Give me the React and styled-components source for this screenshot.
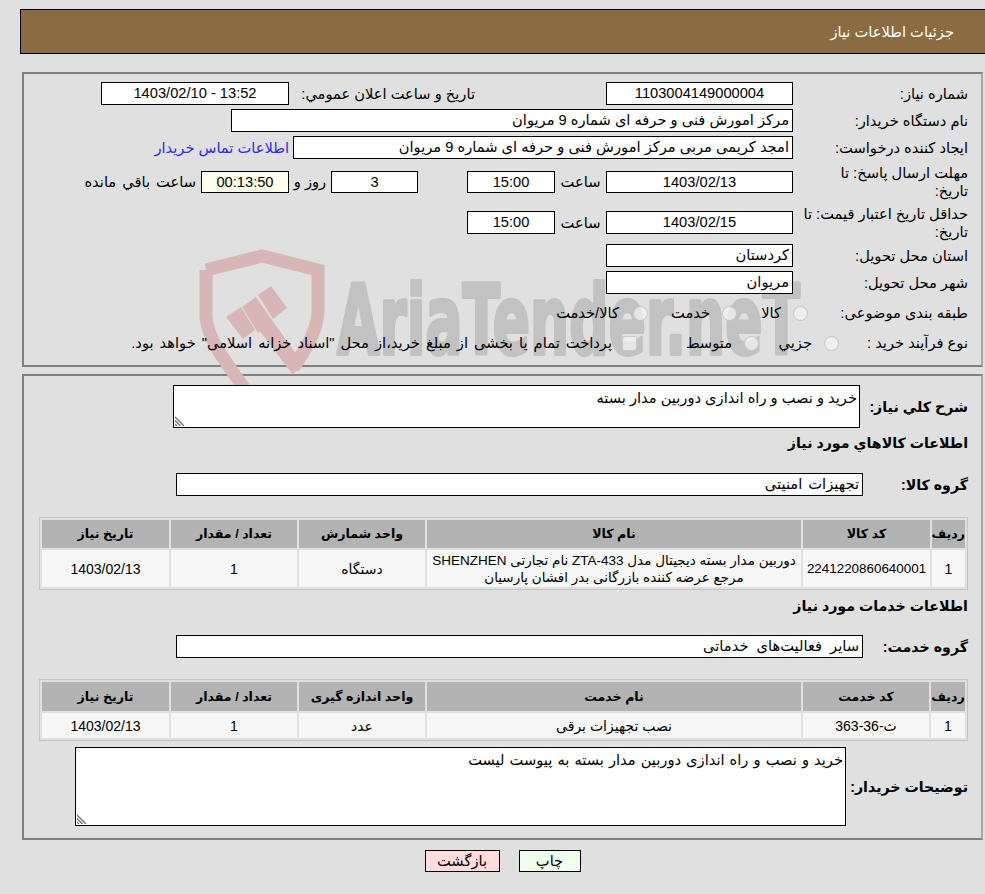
import React from 'react';
import styled, { createGlobalStyle } from 'styled-components';

const GlobalStyle = createGlobalStyle`
  html, body {
    margin: 0;
    padding: 0;
    background: #e0e0e0;
  }
  body {
    font-family: "Liberation Sans", "DejaVu Sans", sans-serif;
    font-size: 14.67px;
    color: #000;
  }
`;

const goodsColumns = [33, 127, 374, 126, 126, 127];
const serviceColumns = [34, 126, 374, 126, 126, 127];

const ResizeGrip = () => (
  <Grip viewBox="0 0 10 10" aria-hidden="true">
    <path d="M0 1 L9 10 M0 4.5 L5.5 10 M0 8 L2 10" fill="none" stroke="#6e6e6e" strokeWidth="1.3" />
  </Grip>
);

const App = () => {
  return (
    <Page dir="rtl">
      <GlobalStyle />
      <Watermark viewBox="0 0 985 894" aria-hidden="true">
        <g fill="none" stroke="#d8b6b6" strokeWidth="13">
          <path d="M206 270 L262 256 L318 270 V312 C317 332 304 352 293 368" />
          <path d="M206 270 V318 C209 342 226 362 244 388" />
        </g>
        <g fill="#d8b6b6">
          <polygon points="258,295 271,286 287,308 273,319" />
          <polygon points="242,307 256,297 272,320 258,333" />
          <polygon points="226,317 241,307 255,330 243,339" />
          <polygon points="259,330 272,320 302,362 293,375" />
        </g>
        <WatermarkText x="337" y="354" textLength="463" lengthAdjust="spacingAndGlyphs">
          AriaTender.neT
        </WatermarkText>
      </Watermark>

      <Header>جزئیات اطلاعات نیاز</Header>

      <Panel $top="18px" $pad="8px 13px 7px 14px">
        <Row>
          <Label>شماره نیاز:</Label>
          <Field $w={187} $center>1103004149000004</Field>
          <Caption $w={317} $pad={131}>تاریخ و ساعت اعلان عمومي:</Caption>
          <Field $w={188} $center>13:52 - 1403/02/10</Field>
        </Row>
        <Row $top={4}>
          <Label>نام دستگاه خریدار:</Label>
          <Field $w={562}>مرکز امورش فنی و حرفه ای شماره 9 مریوان</Field>
        </Row>
        <Row $top={4}>
          <Label>ایجاد کننده درخواست:</Label>
          <Field $w={500}>امجد کریمی مربی مرکز امورش فنی و حرفه ای شماره 9 مریوان</Field>
          <ContactLink href="#">اطلاعات تماس خریدار</ContactLink>
        </Row>
        <Row $top={4} $h={37}>
          <Label>مهلت ارسال پاسخ: تا<br />تاریخ:</Label>
          <Field $w={187} $h={22} $center>1403/02/13</Field>
          <Caption $w={51} $center>ساعت</Caption>
          <Field $w={88} $h={22} $center>15:00</Field>
          <Spacer $w={49} />
          <Field $w={87} $h={22} $center>3</Field>
          <Caption $w={42} $center>روز و</Caption>
          <Field $w={88} $h={22} $center $bg="#ffffee">00:13:50</Field>
          <Caption $pad={5} $ws={2}>ساعت باقي مانده</Caption>
        </Row>
        <Row $top={4} $h={37}>
          <Label>حداقل تاریخ اعتبار قیمت: تا<br />تاریخ:</Label>
          <Field $w={187} $center>1403/02/15</Field>
          <Caption $w={51} $center>ساعت</Caption>
          <Field $w={88} $center>15:00</Field>
        </Row>
        <Row $top={3}>
          <Label>استان محل تحویل:</Label>
          <Field $w={187}>کردستان</Field>
        </Row>
        <Row $top={4}>
          <Label>شهر محل تحویل:</Label>
          <Field $w={187}>مریوان</Field>
        </Row>
        <Row $top={4} $h={30}>
          <Label $w={160}>طبقه بندی موضوعی:</Label>
          <Choice $w={71}><Radio type="radio" disabled />کالا</Choice>
          <Choice $w={89}><Radio type="radio" disabled />خدمت</Choice>
          <Choice $gap={14}><Radio type="radio" disabled />کالا/خدمت</Choice>
        </Row>
        <Row $h={30}>
          <Label $w={129}>نوع فرآیند خرید :</Label>
          <Choice $w={80}><Radio type="radio" disabled />جزيي</Choice>
          <Choice $w={122}><Radio type="radio" disabled />متوسط</Choice>
          <Choice $gap={10} $ws={2}>
            <Check type="checkbox" disabled />
            پرداخت تمام یا بخشی از مبلغ خرید،از محل "اسناد خزانه اسلامی" خواهد بود.
          </Choice>
        </Row>
      </Panel>

      <Panel $top="7px" $pad="9px 13px 12px 15px">
        <Row $h={43}>
          <BoldLabel $w={108}>شرح كلي نياز:</BoldLabel>
          <NoteWrap $w={687} $h={43}>
            <NoteBox readOnly defaultValue="خرید و نصب و راه اندازی دوربین مدار بسته" />
            <ResizeGrip />
          </NoteWrap>
        </Row>
        <Heading $h={30}>اطلاعات کالاهاي مورد نياز</Heading>
        <Row $top={15}>
          <BoldLabel $w={105}>گروه کالا:</BoldLabel>
          <Field $w={687} $ws={2}>تجهیزات امنیتی</Field>
        </Row>
        <DataTable $top={21}>
          <colgroup>
            {goodsColumns.map((w, i) => <col key={i} style={{ width: w }} />)}
          </colgroup>
          <thead>
            <HeadRow $h={28}>
              <th>ردیف</th>
              <th>کد کالا</th>
              <th>نام کالا</th>
              <th>واحد شمارش</th>
              <th>تعداد / مقدار</th>
              <th>تاریخ نیاز</th>
            </HeadRow>
          </thead>
          <tbody>
            <BodyRow $h={37}>
              <td>1</td>
              <CodeCell>2241220860640001</CodeCell>
              <NameCell>
                دوربین مدار بسته دیجیتال مدل ZTA-433 نام تجارتی SHENZHEN<br />
                مرجع عرضه کننده بازرگانی بدر افشان پارسیان
              </NameCell>
              <td>دستگاه</td>
              <td>1</td>
              <td>1403/02/13</td>
            </BodyRow>
          </tbody>
        </DataTable>
        <Heading $h={32}>اطلاعات خدمات مورد نیاز</Heading>
        <Row $top={13}>
          <BoldLabel $w={105}>گروه خدمت:</BoldLabel>
          <Field $w={687} $ws={4}>سایر فعالیت‌های خدماتی</Field>
        </Row>
        <DataTable $top={21}>
          <colgroup>
            {serviceColumns.map((w, i) => <col key={i} style={{ width: w }} />)}
          </colgroup>
          <thead>
            <HeadRow $h={29}>
              <th>ردیف</th>
              <th>کد خدمت</th>
              <th>نام خدمت</th>
              <th>واحد اندازه گیری</th>
              <th>تعداد / مقدار</th>
              <th>تاریخ نیاز</th>
            </HeadRow>
          </thead>
          <tbody>
            <BodyRow $h={25}>
              <td>1</td>
              <td>ث-36-363</td>
              <td>نصب تجهیزات برقی</td>
              <td>عدد</td>
              <td>1</td>
              <td>1403/02/13</td>
            </BodyRow>
          </tbody>
        </DataTable>
        <Row $top={6} $h={79}>
          <BoldLabel $w={122}>توضیحات خریدار:</BoldLabel>
          <NoteWrap $w={771} $h={79}>
            <NoteBox $ws={1} readOnly defaultValue="خرید و نصب و راه اندازی دوربین مدار بسته به پیوست لیست" />
            <ResizeGrip />
          </NoteWrap>
        </Row>
      </Panel>

      <Actions>
        <ActionButton $bg="#eeffee" $w={62}>چاپ</ActionButton>
        <ActionButton $bg="#ffdddd" $w={75}>بازگشت</ActionButton>
      </Actions>
    </Page>
  );
};

const Page = styled.div`
  position: relative;
  box-sizing: border-box;
  width: 985px;
  height: 894px;
  overflow: hidden;
  padding: 9px 0 0 20px;
  line-height: 18px;
`;

const Watermark = styled.svg`
  position: absolute;
  top: 0;
  left: 0;
  width: 985px;
  height: 894px;
  z-index: 1;
  pointer-events: none;
`;

const WatermarkText = styled.text`
  direction: ltr;
  font-family: "DejaVu Sans", sans-serif;
  font-size: 96px;
  font-weight: 700;
  fill: #c2c2c2;
  stroke: #c2c2c2;
  stroke-width: 4px;
  stroke-linejoin: round;
`;

const Header = styled.div`
  box-sizing: border-box;
  height: 45px;
  display: flex;
  align-items: center;
  padding-right: 31px;
  background: #8b6c42;
  border: 1px solid #000;
  border-right: none;
  color: #fff;
`;

const Panel = styled.div`
  box-sizing: border-box;
  margin: ${p => p.$top} 2px 0 2px;
  padding: ${p => p.$pad};
  border: 2px solid #808080;
  border-right-color: #a6a6a6;
  background: #e0e0e0;

  & > * {
    position: relative;
    z-index: 2;
  }
`;

const Row = styled.div`
  display: flex;
  align-items: center;
  min-height: 23px;
  height: ${p => (p.$h ? `${p.$h}px` : '23px')};
  margin-top: ${p => p.$top || 0}px;
`;

const Label = styled.div`
  flex: none;
  width: ${p => p.$w || 175}px;
  white-space: nowrap;
`;

const BoldLabel = styled(Label)`
  font-size: 14.2px;
  font-weight: 700;
`;

const Heading = styled.div`
  display: flex;
  align-items: center;
  height: ${p => p.$h}px;
  font-size: 14.2px;
  font-weight: 700;
`;

const Field = styled.div`
  flex: none;
  box-sizing: border-box;
  width: ${p => p.$w}px;
  height: ${p => p.$h || 23}px;
  padding: 0 3px;
  border: 1px solid #000;
  background: ${p => p.$bg || '#fff'};
  line-height: ${p => (p.$h || 23) - 2}px;
  text-align: ${p => (p.$center ? 'center' : 'right')};
  word-spacing: ${p => p.$ws || 0}px;
  white-space: nowrap;
  overflow: hidden;
`;

const Caption = styled.div`
  flex: none;
  box-sizing: border-box;
  width: ${p => (p.$w ? `${p.$w}px` : 'auto')};
  padding-right: ${p => p.$pad || 0}px;
  text-align: ${p => (p.$center ? 'center' : 'right')};
  word-spacing: ${p => p.$ws || 0}px;
  white-space: nowrap;
`;

const Spacer = styled.div`
  flex: none;
  width: ${p => p.$w}px;
`;

const ContactLink = styled.a`
  margin-right: 4px;
  color: #2a2aee;
  text-decoration: none;
  white-space: nowrap;
`;

const Choice = styled.label`
  flex: none;
  display: flex;
  align-items: center;
  gap: ${p => p.$gap || 12}px;
  width: ${p => (p.$w ? `${p.$w}px` : 'auto')};
  word-spacing: ${p => p.$ws || 0}px;
  white-space: nowrap;
`;

const Radio = styled.input`
  appearance: none;
  flex: none;
  box-sizing: border-box;
  width: 15px;
  height: 15px;
  margin: 0;
  border: 1px solid rgba(190, 190, 190, 0.75);
  border-radius: 50%;
  background: rgba(245, 245, 245, 0.7);
`;

const Check = styled(Radio)`
  border-radius: 3px;
`;

const NoteWrap = styled.div`
  position: relative;
  flex: none;
  width: ${p => p.$w}px;
  height: ${p => p.$h}px;
`;

const NoteBox = styled.textarea`
  display: block;
  box-sizing: border-box;
  width: 100%;
  height: 100%;
  margin: 0;
  padding: 3px 2px 2px;
  border: 1px solid #000;
  border-radius: 0;
  outline: none;
  resize: none;
  background: #fff;
  color: #000;
  font: inherit;
  font-size: 14.67px;
  line-height: 18px;
  word-spacing: ${p => p.$ws || 0}px;
`;

const Grip = styled.svg`
  position: absolute;
  left: 2px;
  bottom: 2px;
  width: 10px;
  height: 10px;
`;

const DataTable = styled.table`
  box-sizing: border-box;
  width: 929px;
  margin-top: ${p => p.$top}px;
  table-layout: fixed;
  border-collapse: separate;
  border-spacing: 2px;
  border: 1px solid #c4c4c4;
`;

const HeadRow = styled.tr`
  height: ${p => p.$h}px;

  th {
    padding: 0;
    background: #b3b3b3;
    font-size: 12.6px;
    font-weight: 700;
    text-align: center;
  }
`;

const BodyRow = styled.tr`
  height: ${p => p.$h}px;

  td {
    padding: 0;
    background: #f6f6f6;
    font-size: 14px;
    text-align: center;
  }
`;

const CodeCell = styled.td`
  && {
    font-size: 13.4px;
  }
`;

const NameCell = styled.td`
  && {
    font-size: 13.5px;
    line-height: 17px;
    white-space: nowrap;
  }
`;

const Actions = styled.div`
  position: relative;
  z-index: 2;
  display: flex;
  justify-content: center;
  gap: 19px;
  margin: 10px 2px 0;
`;

const ActionButton = styled.button`
  box-sizing: border-box;
  width: ${p => p.$w}px;
  height: 22px;
  padding: 0;
  border: 1px solid #000;
  background: ${p => p.$bg};
  color: #000;
  font: inherit;
`;

export default App;
